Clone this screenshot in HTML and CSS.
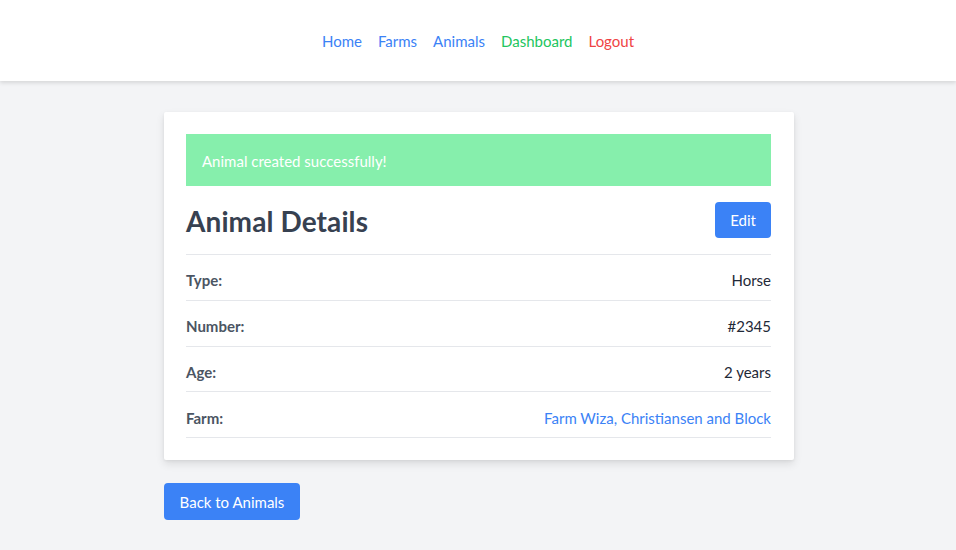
FILE: index.html
```html
<!DOCTYPE html>
<html>
<head>
<meta charset="utf-8">
<link rel="stylesheet" href="styles.css">
</head>
<body>
<nav class="topnav">
  <a class="nav-link blue" href="#">Home</a>
  <a class="nav-link blue" href="#">Farms</a>
  <a class="nav-link blue" href="#">Animals</a>
  <a class="nav-link green" href="#">Dashboard</a>
  <a class="nav-link red" href="#">Logout</a>
</nav>
<main class="page">
  <section class="card">
    <div class="alert">Animal created successfully!</div>
    <div class="title-row">
      <h1 class="title">Animal Details</h1>
      <a class="btn" href="#">Edit</a>
    </div>
    <div class="row"><span class="label">Type:</span><span class="value">Horse</span></div>
    <div class="row"><span class="label">Number:</span><span class="value">#2345</span></div>
    <div class="row"><span class="label">Age:</span><span class="value">2 years</span></div>
    <div class="row"><span class="label">Farm:</span><a class="value link" href="#">Farm Wiza, Christiansen and Block</a></div>
  </section>
  <a class="btn back" href="#">Back to Animals</a>
</main>
</body>
</html>
```
FILE: styles.css
```css
* { box-sizing: border-box; }
html, body { margin: 0; padding: 0; }
body {
  font-family: "Lato", "Open Sans", sans-serif;
  font-size: 15px;
  background: #f3f4f6;
  color: #1f2937;
  min-height: 550px;
}
a { text-decoration: none; }
.topnav {
  height: 81px;
  background: #fff;
  display: flex;
  justify-content: center;
  align-items: center;
  gap: 16px;
  box-shadow: 0 2px 4px rgba(0,0,0,0.12);
}
.nav-link { font-size: 15px; }
.blue { color: #3b82f6; }
.green { color: #22c55e; }
.red { color: #ef4444; }
.page {
  width: 632px;
  padding-left: 2px;
  margin: 31px auto 0;
}
.card {
  background: #fff;
  padding: 22px 23px 22px 22px;
  box-shadow: 0 4px 8px rgba(0,0,0,0.1), 0 1px 3px rgba(0,0,0,0.06);
  border-radius: 2px;
}
.alert {
  background: #86efac;
  color: #fff;
  height: 52px;
  display: flex;
  align-items: center;
  padding: 1px 16px 0;
}
.title-row {
  display: flex;
  justify-content: space-between;
  align-items: center;
  padding: 16px 0 16px;
  border-bottom: 1px solid #e5e7eb;
}
.title {
  margin: 0;
  font-size: 28px;
  font-weight: 700;
  color: #374151;
  padding-top: 2px;
  letter-spacing: 0.1px;
}
.btn {
  display: inline-flex;
  align-items: center;
  justify-content: center;
  background: #3b82f6;
  color: #fff;
  border-radius: 4px;
  height: 36px;
  padding: 0 15px;
  white-space: nowrap;
}
.row {
  display: flex;
  justify-content: space-between;
  align-items: center;
  height: 45.75px;
  padding-top: 6px;
  border-bottom: 1px solid #e5e7eb;
}
.label { font-weight: 700; color: #4b5563; }
.value { color: #1f2937; }
.link { color: #3b82f6; }
.back {
  margin-top: 23px;
  height: 37px;
  width: 136px;
}
```
